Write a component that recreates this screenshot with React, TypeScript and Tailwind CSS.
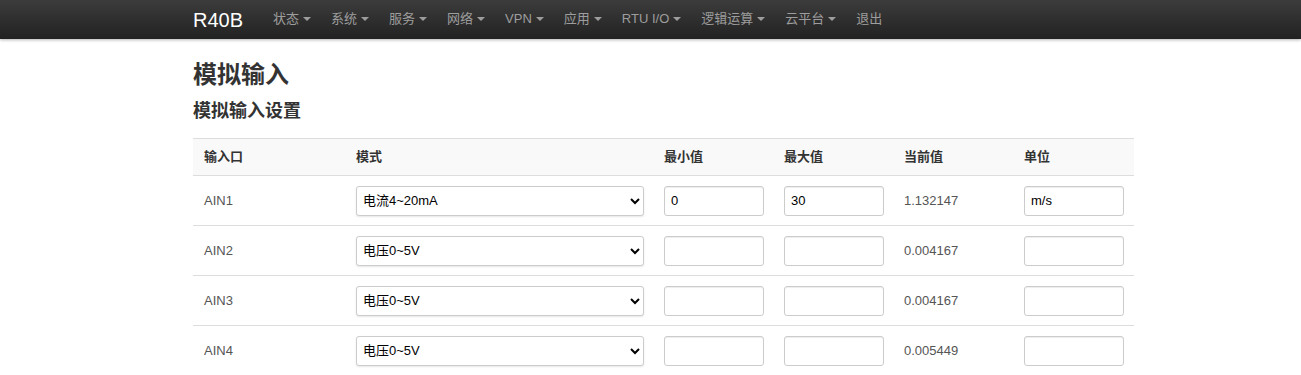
import React from "react";

const FONT = '"Liberation Sans", Arial, "Noto Sans CJK SC", sans-serif';

const menu = [
  { label: "状态", caret: true },
  { label: "系统", caret: true },
  { label: "服务", caret: true },
  { label: "网络", caret: true },
  { label: "VPN", caret: true },
  { label: "应用", caret: true },
  { label: "RTU I/O", caret: true },
  { label: "逻辑运算", caret: true },
  { label: "云平台", caret: true },
  { label: "退出", caret: false },
];

const rows = [
  { name: "AIN1", mode: "电流4~20mA", min: "0", max: "30", cur: "1.132147", unit: "m/s" },
  { name: "AIN2", mode: "电压0~5V", min: "", max: "", cur: "0.004167", unit: "" },
  { name: "AIN3", mode: "电压0~5V", min: "", max: "", cur: "0.004167", unit: "" },
  { name: "AIN4", mode: "电压0~5V", min: "", max: "", cur: "0.005449", unit: "" },
];

function Caret() {
  return (
    <span className="ml-[4px] inline-block h-0 w-0 border-x-[4px] border-t-[4px] border-x-transparent border-t-[#9d9d9d] align-middle" />
  );
}

function TextInput({ value }: { value: string }) {
  return (
    <input
      type="text"
      defaultValue={value}
      className="h-[30px] w-[100px] rounded-[3px] border border-[#ccc] bg-white px-[6px] text-[13px] text-black shadow-[inset_0_1px_1px_rgba(0,0,0,0.075)] outline-none"
      style={{ fontFamily: FONT }}
    />
  );
}

export default function App() {
  return (
    <div className="min-h-[375px] bg-white text-[13px] text-[#333]" style={{ fontFamily: FONT }}>
      <nav className="h-[39px] bg-gradient-to-b from-[#3c3c3c] to-[#222] shadow-[0_1px_3px_rgba(0,0,0,0.3)]">
        <div className="flex h-full items-center pl-[193px]">
          <span className="mr-[30px] text-[20px] leading-none text-white">R40B</span>
          <ul className="-mt-[1px] flex items-center">
            {menu.map((m) => (
              <li key={m.label} className="flex items-center px-[10px] text-[13px] text-[#9d9d9d] first:pl-0">
                {m.label}
                {m.caret && <Caret />}
              </li>
            ))}
          </ul>
        </div>
      </nav>

      <div className="ml-[193px] w-[941px]">
        <h1 className="mt-[23px] text-[24px] font-bold leading-[26px] text-[#333]">模拟输入</h1>
        <h3 className="mt-[13px] text-[18px] font-bold leading-[20px] text-[#333]">模拟输入设置</h3>

        <table className="mt-[17px] w-[941px] table-fixed border-collapse">
          <colgroup>
            <col className="w-[152px]" />
            <col className="w-[308px]" />
            <col className="w-[120px]" />
            <col className="w-[120px]" />
            <col className="w-[120px]" />
            <col className="w-[121px]" />
          </colgroup>
          <thead>
            <tr className="h-[37px] border-y border-[#ddd] bg-[#f9f9f9]">
              {["输入口", "模式", "最小值", "最大值", "当前值", "单位"].map((h) => (
                <th key={h} className="pl-[11px] text-left text-[13px] font-bold text-[#333]">
                  {h}
                </th>
              ))}
            </tr>
          </thead>
          <tbody>
            {rows.map((r) => (
              <tr key={r.name} className="h-[50px] border-b border-[#ddd] last:border-b-0">
                <td className="pl-[11px] text-[#555]">{r.name}</td>
                <td className="pl-[11px]">
                  <select
                    defaultValue={r.mode}
                    className="h-[30px] w-[288px] rounded-[3px] border border-[#ccc] bg-white pl-[2px] text-[13px] text-black shadow-[0_1px_2px_rgba(0,0,0,0.1)] outline-none"
                    style={{ fontFamily: FONT }}
                  >
                    <option value="电流4~20mA">电流4~20mA</option>
                    <option value="电压0~5V">电压0~5V</option>
                  </select>
                </td>
                <td className="pl-[11px]">
                  <TextInput value={r.min} />
                </td>
                <td className="pl-[11px]">
                  <TextInput value={r.max} />
                </td>
                <td className="pl-[11px] text-[#555]">{r.cur}</td>
                <td className="pl-[11px]">
                  <TextInput value={r.unit} />
                </td>
              </tr>
            ))}
          </tbody>
        </table>
      </div>
    </div>
  );
}
